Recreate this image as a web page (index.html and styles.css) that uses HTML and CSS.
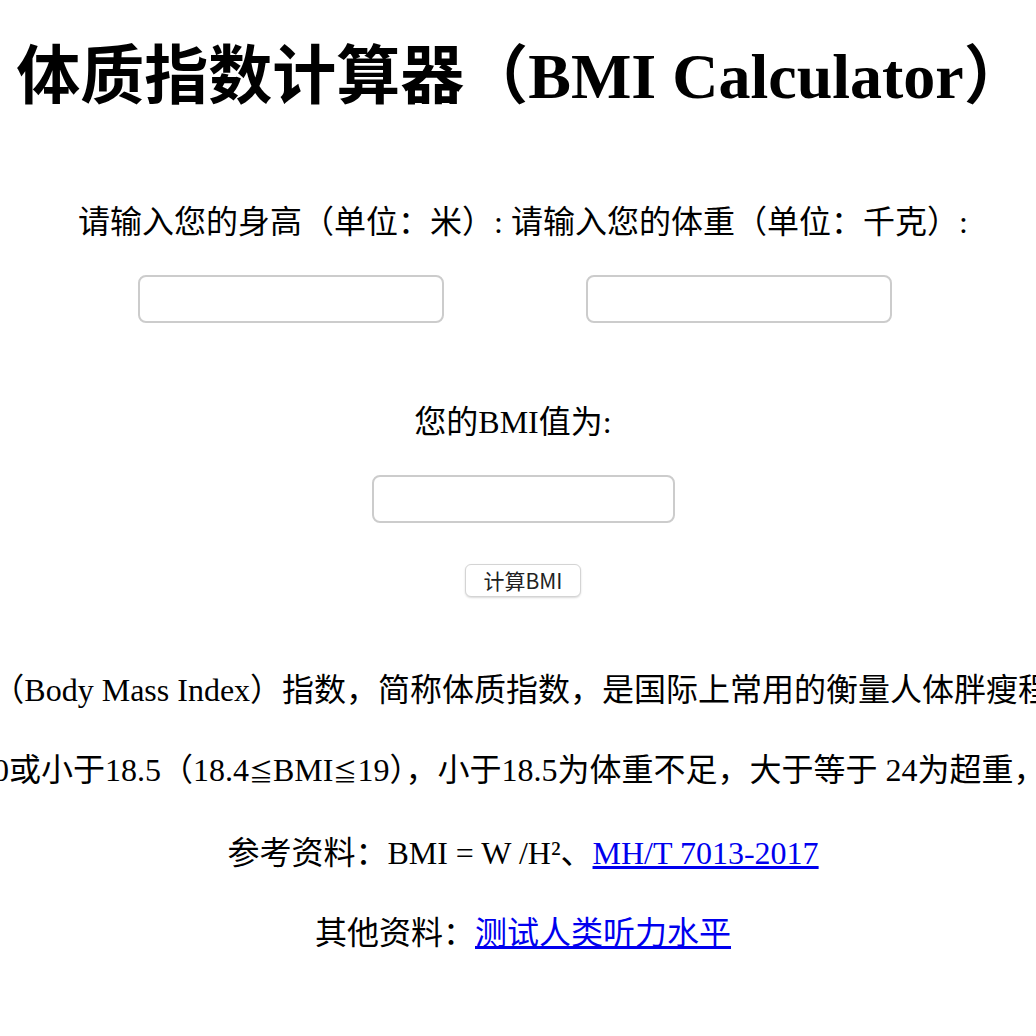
FILE: index.html
```html
<!DOCTYPE html>
<html lang="zh-CN">
<head>
<meta charset="utf-8">
<title>体质指数计算器（BMI Calculator）</title>
<link rel="stylesheet" href="styles.css">
</head>
<body>
<main class="page">
  <h1 class="title">体质指数计算器（BMI Calculator）</h1>
  <section class="calc">
    <div class="fields">
      <div class="field">
        <label class="label" for="height">请输入您的身高（单位：米）:</label>
        <input id="height" class="input" type="text">
      </div>
      <div class="field">
        <label class="label" for="weight">请输入您的体重（单位：千克）:</label>
        <input id="weight" class="input" type="text">
      </div>
    </div>
    <div class="field result">
      <label class="label label-result" for="bmi">您的BMI值为:</label>
      <input id="bmi" class="input input-result" type="text" readonly>
    </div>
    <button class="btn" type="button">计算BMI</button>
  </section>
  <section class="info">
    <p class="line">BMI（Body Mass Index）指数，简称体质指数，是国际上常用的衡量人体胖瘦程度。</p>
    <p class="line line-range">偏瘦：BMI小于20或小于18.5（18.4<span class="math">≦</span>BMI<span class="math">≦</span>19），小于18.5为体重不足，大于等于 24为超重，28及以上为肥胖。</p>
    <p class="line">参考资料：BMI = W /H²、<a class="link" href="#">MH/T 7013-2017</a></p>
    <p class="line">其他资料：<a class="link" href="#">测试人类听力水平</a></p>
  </section>
</main>
</body>
</html>
```

FILE: styles.css
```css
html, body {
  margin: 0;
  padding: 0;
  background: #ffffff;
}

body {
  font-family: "Liberation Serif", "Noto Sans CJK SC", serif;
  font-size: 32px;
  color: #000000;
}

.page {
  display: flex;
  flex-direction: column;
  align-items: center;
  overflow: hidden;
  min-height: 1036px;
}

.title {
  margin: 37px 0 0;
  padding-left: 8px;
  font-size: 64px;
  line-height: 80px;
  font-weight: bold;
  white-space: nowrap;
}

.calc {
  margin-top: 85px;
  padding-left: 10px;
  display: flex;
  flex-direction: column;
  align-items: center;
}

.fields {
  display: flex;
  gap: 8px;
}

.field {
  display: flex;
  flex-direction: column;
  align-items: center;
  gap: 33px;
}

.label {
  line-height: 40px;
  white-space: nowrap;
}

.label-result {
  margin-right: 20px;
}

.input {
  width: 306px;
  height: 48px;
  box-sizing: border-box;
  border: 2px solid #cccccc;
  border-radius: 8px;
  background: #ffffff;
  margin: 0;
  padding: 0 10px;
  font-size: 20px;
  outline: none;
}

.input-result {
  width: 303px;
}

.result {
  margin-top: 79px;
}

.btn {
  margin-top: 41px;
  width: 116px;
  height: 33px;
  box-sizing: border-box;
  padding: 0;
  background: #ffffff;
  border: 1px solid #d4d4d4;
  border-radius: 6px;
  box-shadow: 0 1px 2px rgba(0, 0, 0, 0.15);
  font-family: "Noto Sans CJK SC", "Noto Sans", sans-serif;
  font-size: 21px;
  color: #222222;
  line-height: 31px;
}

.info {
  margin-top: 73px;
  padding-left: 10px;
  display: flex;
  flex-direction: column;
  align-items: center;
  gap: 40px;
}

.line {
  margin: 0;
  line-height: 40px;
  white-space: nowrap;
}

.line-range {
  padding-left: 12px;
}

.math {
  font-family: "DejaVu Serif", serif;
  font-size: 24px;
}

.link {
  color: #0000ee;
  text-decoration: underline;
}
```
